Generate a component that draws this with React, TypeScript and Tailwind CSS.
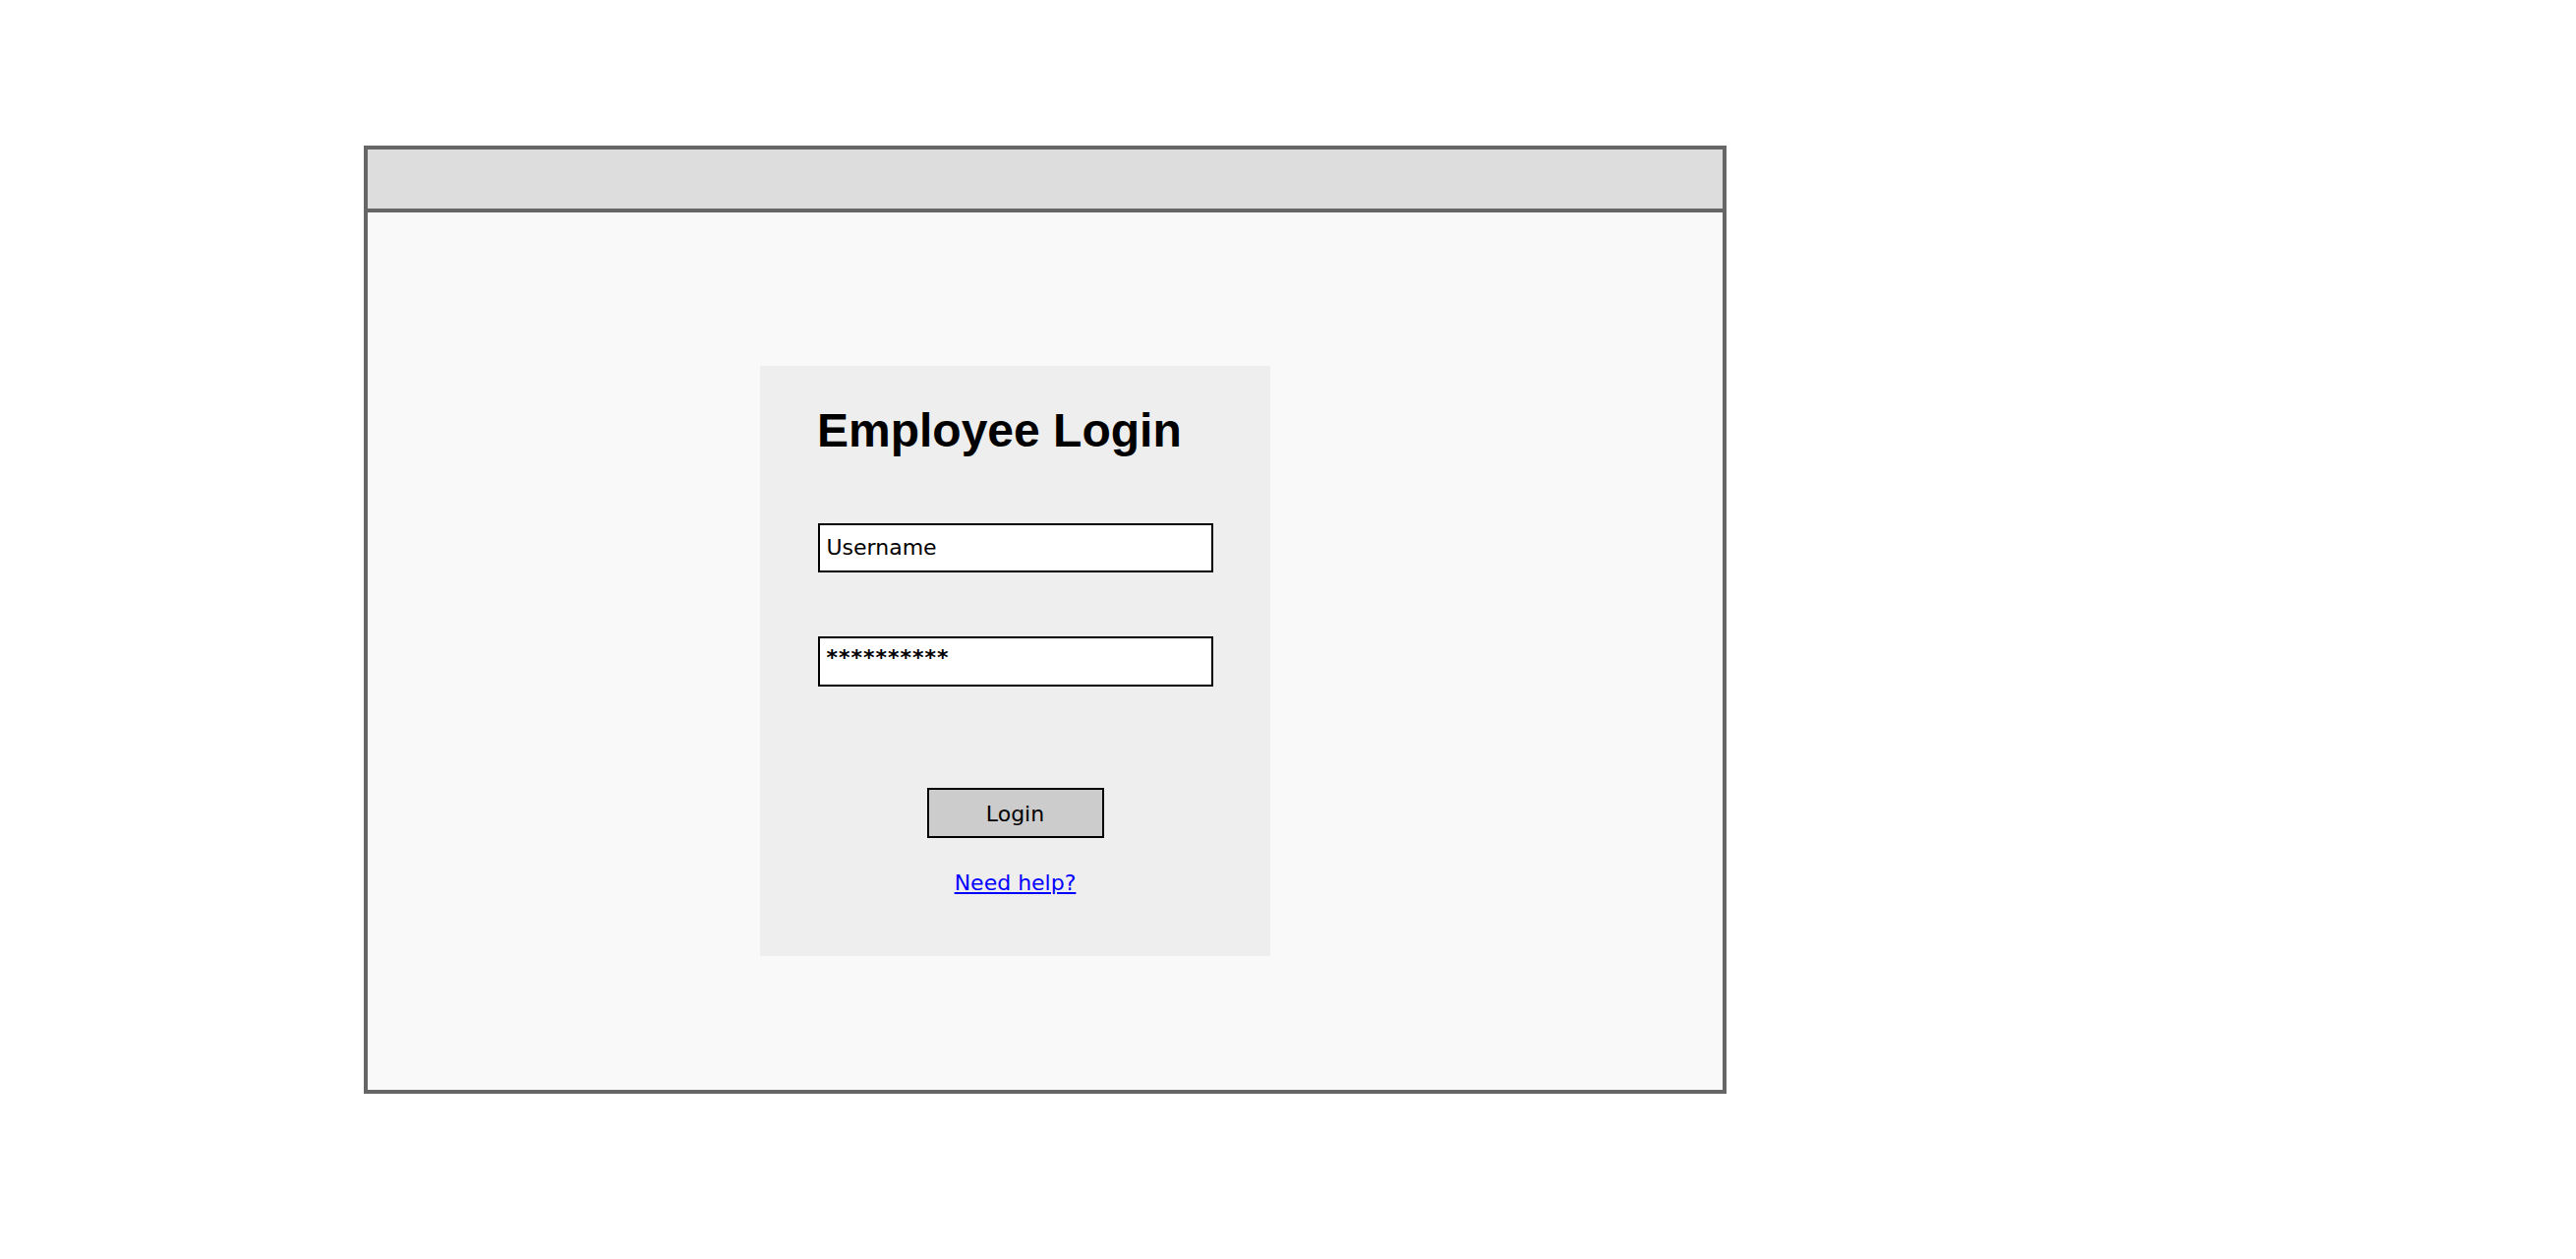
export default function App() {
  const sketch = { fontFamily: '"Comic Sans MS", "DejaVu Sans", sans-serif' };
  return (
    <div className="min-h-screen bg-white pl-[370px] pt-[148px]">
      <div className="flex h-[964px] w-[1386px] flex-col border-4 border-[#666666] bg-[#f9f9f9]">
        <div className="h-[64px] shrink-0 border-b-4 border-[#666666] bg-[#dddddd]" />
        <div className="flex-1 pl-[399px] pt-[156px]">
          <div className="flex h-[600px] w-[519px] flex-col items-center bg-[#eeeeee] pt-[42px]">
            <h1
              className="ml-[58px] self-start text-[48px] font-bold leading-[48px] text-black"
              style={{ fontFamily: '"Liberation Sans", Arial, sans-serif' }}
            >
              Employee Login
            </h1>
            <div
              className="mt-[70px] flex h-[50px] w-[402px] items-center border-2 border-black bg-white pl-[7px] text-[22px] leading-none text-black"
              style={sketch}
            >
              Username
            </div>
            <div
              className="mt-[65px] h-[51px] w-[402px] border-2 border-black bg-white pl-[7px] pt-[9px] text-[22px] font-bold leading-none tracking-[1px] text-black"
              style={sketch}
            >
              **********
            </div>
            <button
              className="mt-[103px] flex h-[51px] w-[180px] items-center justify-center border-2 border-black bg-[#cccccc] pt-[2px] text-[22px] leading-none text-black"
              style={sketch}
            >
              Login
            </button>
            <a
              href="#"
              className="mt-[35px] text-[22px] leading-none text-[#0000ff] underline"
              style={sketch}
            >
              Need help?
            </a>
          </div>
        </div>
      </div>
    </div>
  );
}
